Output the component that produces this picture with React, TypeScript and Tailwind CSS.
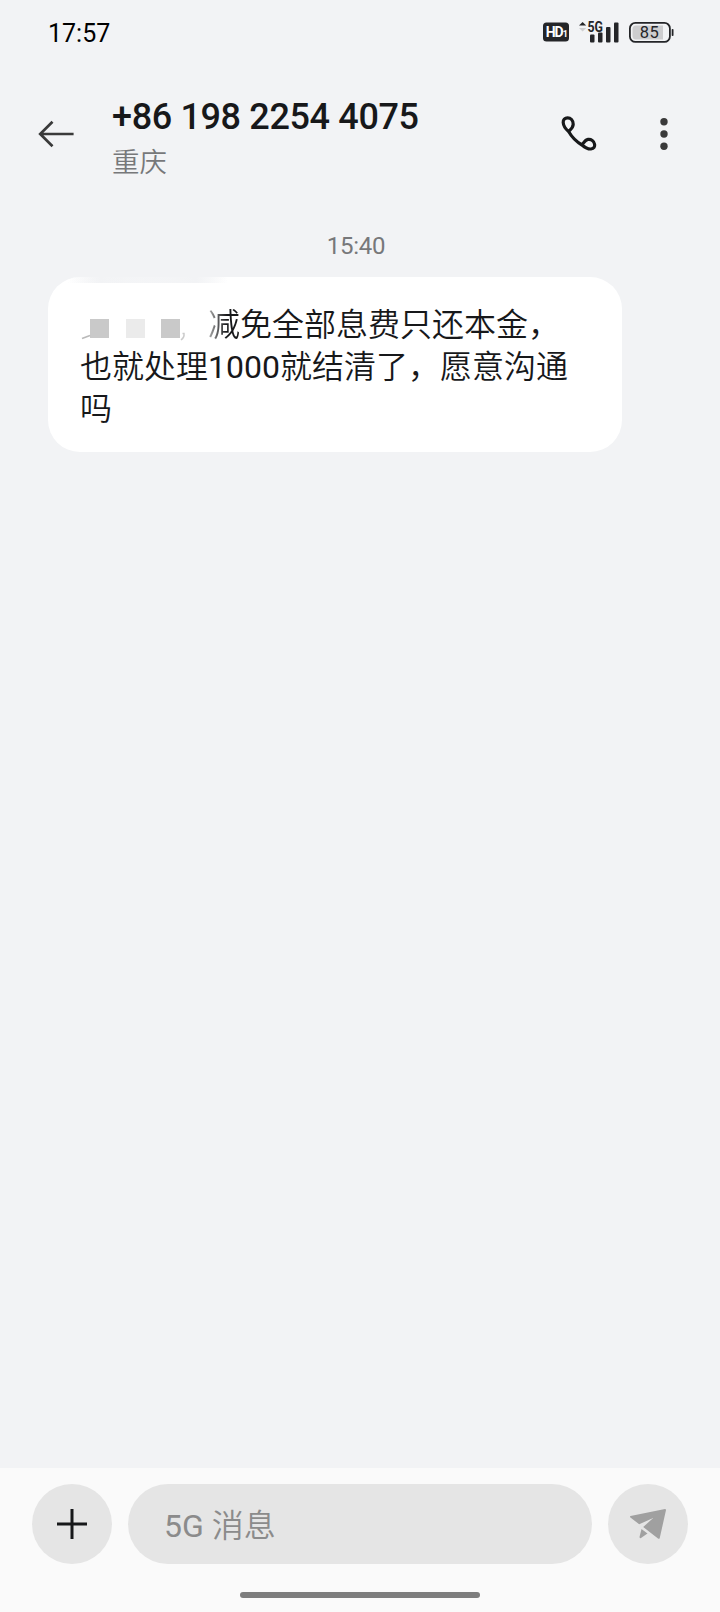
function StatusBar() {
  return (
    <div className="flex h-16 items-center justify-between pl-12 pr-[46px]">
      <span className="pt-0.5 text-[25px] leading-none text-black">17:57</span>
      <div className="flex items-center">
        <svg className="h-5 w-[26px]" viewBox="0 0 26 20">
          <rect y="0.5" width="26" height="19" rx="3.5" fill="#242528" />
          <text x="2.8" y="15.4" fontSize="14" fontWeight="700" letterSpacing="-1.3" fill="#fff">
            HD<tspan dx="0.5" fontSize="9">1</tspan>
          </text>
        </svg>
        <svg className="ml-[10px] h-[22px] w-[41px] overflow-visible" viewBox="0 0 41 22">
          <path d="M0 4.5 3.6 1l3.6 3.5z" fill="#242528" />
          <path d="M0 7 3.6 10.5 7.2 7z" fill="#cfcfd1" />
          <text x="8.5" y="10.5" fontSize="14" fontWeight="700" fill="#242528" textLength="15.5" lengthAdjust="spacingAndGlyphs">5G</text>
          <rect x="11" y="13.5" width="4.5" height="8" rx="1" fill="#242528" />
          <rect x="19" y="11.5" width="4.5" height="10" rx="1" fill="#242528" />
          <rect x="27" y="6" width="4.5" height="15.5" rx="1" fill="#242528" />
          <rect x="35" y="1.5" width="4.5" height="20" rx="1" fill="#242528" />
        </svg>
        <svg className="ml-[9px] h-[22px] w-[45px]" viewBox="0 0 45 22">
          <rect x="0.9" y="1.9" width="40" height="19" rx="5.5" fill="none" stroke="#242528" strokeWidth="1.8" />
          <path d="M7 4.5h27v14H7a3.5 3.5 0 0 1-3.5-3.5V8A3.5 3.5 0 0 1 7 4.5z" fill="#cdcdcf" />
          <rect x="42.7" y="8" width="1.8" height="7" rx="0.8" fill="#242528" />
          <text x="10.8" y="17.4" fontSize="16.5" fontWeight="400" letterSpacing="0.5" fill="#242528">85</text>
        </svg>
      </div>
    </div>
  )
}

function Header() {
  return (
    <header className="flex h-[140px] items-center pl-[38px]">
      <svg className="h-7 w-9" viewBox="0 0 36 28" fill="none" stroke="#3a3a3a" strokeWidth="2.7">
        <path d="M14.5 1.8 2.2 14l12.3 12.2M2.2 14h33.4" />
      </svg>
      <div className="ml-[38px] flex-1 pt-[10px]">
        <h1 className="text-[36px] font-medium leading-[42px] tracking-[-0.36px] text-[#17181a]">+86 198 2254 4075</h1>
        <p className="mt-[5px] text-[27.5px] font-[350] leading-[40px] text-[#77787a]">重庆</p>
      </div>
      <svg className="h-9 w-9" viewBox="0 0 36 36" fill="none" stroke="#17181a" strokeWidth="3.2" strokeLinejoin="round">
        <path d="M7.6 15.5C9 14 12.2 11.8 12.2 8.2C12.2 4.5 9.6 1.9 6.6 1.9C3.8 1.9 2 3.5 2.2 6.5C2.4 9.8 4.2 12.6 7.6 15.5C10.5 20.5 15 25.5 21 29C24.5 32 27.5 33.2 30 33C33 32.8 34 30.6 33.6 28.2C33 25 30.2 23 27 23.4C24 23.8 23 26.5 21 29" />
      </svg>
      <svg className="ml-[63px] mr-[52px] h-9 w-2" viewBox="0 0 8 36" fill="#3a3a3a">
        <circle cx="4" cy="5.7" r="3.7" />
        <circle cx="4" cy="18" r="3.7" />
        <circle cx="4" cy="30.3" r="3.7" />
      </svg>
    </header>
  )
}

function Message() {
  return (
    <div className="relative ml-12 h-[175px] w-[574px] rounded-[32px] bg-white pl-8 pt-[27px] text-[32px] font-[350] leading-[42px] text-[#17181a]">
      {/* smudged strip along the top edge */}
      <div className="absolute left-5 top-0 h-1.5 w-[160px] bg-linear-to-r from-transparent via-[#f2f3f5] via-20% to-transparent" />
      <div className="absolute left-5 top-0 h-1.5 w-[160px] bg-linear-to-r from-transparent from-0% via-[#f2f3f5] via-80% to-transparent" />
      {/* leftovers of the erased name */}
      <svg className="absolute left-[33px] top-[54px] h-4 w-28" viewBox="0 0 112 16" fill="none" stroke="#a8a8a8" strokeWidth="1.5">
        <path d="M1 7.5 9 4.5" opacity=".8" />
        <path d="M101.5 2.5h1.5q.5 4-3 6.500" opacity=".6" />
      </svg>
      <div className="flex">
        <span className="flex w-32 items-center gap-[16.5px] pl-[10px] pt-[6px]">
          <i className="size-[19px] bg-[#c9c9c9]" />
          <i className="size-[19px] bg-[#ebebeb]" />
          <i className="size-[19px] bg-[#c9c9c9]" />
        </span>
        <span>
          <span className="bg-linear-to-r from-[#b0b0b0] to-[#17181a] to-60% bg-clip-text text-transparent">减</span>
          免全部息费只还本金，
        </span>
      </div>
      <p>
        也就处理<span className="font-normal">1000</span>就结清了，愿意沟通
      </p>
      <p>吗</p>
    </div>
  )
}

function Composer() {
  return (
    <footer className="h-36 bg-[#fafafa] px-8 pt-4">
      <div className="flex gap-4">
        <button className="flex size-20 items-center justify-center rounded-full bg-[#e5e5e5]">
          <svg className="size-[30px]" viewBox="0 0 30 30" stroke="#17181a" strokeWidth="3">
            <path d="M15 0v30M0 15h30" />
          </svg>
        </button>
        <div className="flex h-20 flex-1 items-center whitespace-pre rounded-full bg-[#e5e5e5] pl-9 pt-1 text-[32px] text-[#8b8b8b]">
          5G <span className="font-[350]">消息</span>
        </div>
        <button className="flex size-20 items-center justify-center rounded-full bg-[#e5e5e5]">
          <svg className="h-[30px] w-9" viewBox="0 0 36 30" fill="#a0a0a0">
            <path d="M0.5 7 35 0Q36 0 36 1L29.7 29.3Q29 30.3 28 29.5L13.2 18 23.2 9 9.2 15.2 0.4 8.5Q-0.4 7.5 0.5 7z" />
            <path d="M11.5 20 17.5 24.5 11 29Q9.5 29.5 9.5 28z" />
          </svg>
        </button>
      </div>
      <div className="mx-auto mt-7 h-1.5 w-60 rounded-full bg-[#7d7d7d]" />
    </footer>
  )
}

export default function App() {
  return (
    <div className="flex h-[1612px] w-[720px] flex-col bg-[#f2f3f5] font-['Roboto','Noto_Sans_CJK_SC',sans-serif]">
      <StatusBar />
      <Header />
      <main className="flex-1 pt-[25px]">
        <div className="mb-[14px] pr-2 text-center text-[24px] leading-[34px] tracking-[-0.3px] text-[#77787a]">15:40</div>
        <Message />
      </main>
      <Composer />
    </div>
  )
}
